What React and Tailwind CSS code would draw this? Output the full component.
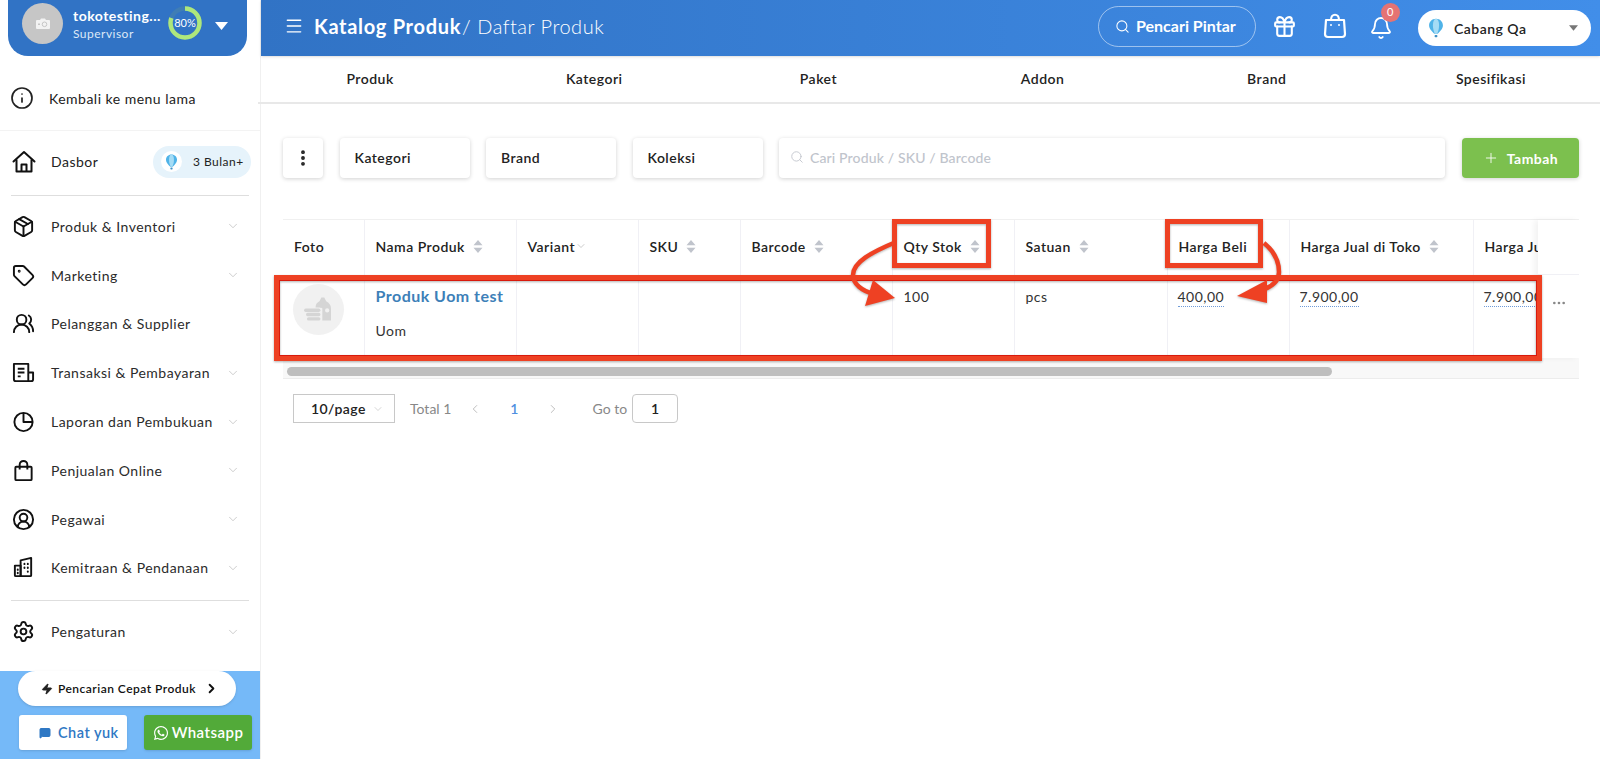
import React from 'react';
import {
  Info, Package, Tag, UsersRound, CircleUserRound, Settings, ChevronDown, ChevronLeft, ChevronRight,
  Search, Gift, Bell, Menu, Plus, Zap, MessageSquare, MoreVertical, MoreHorizontal,
} from 'lucide-react';
import { FaWhatsapp } from 'react-icons/fa';

function HomeIcon({ className }) {
  return (
    <svg viewBox="0 0 24 24" className={className} fill="none" stroke="currentColor" strokeWidth="2" strokeLinejoin="round">
      <path d="M1.500 11.500L12 2l10.500 9.500" strokeLinecap="round" />
      <path d="M4.500 9.500V21.500h15V9.500" />
      <path d="M9.500 21.500v-7h5v7" />
    </svg>
  );
}

function ReceiptIcon({ className }) {
  return (
    <svg viewBox="0 0 24 24" className={className} fill="none" stroke="currentColor" strokeWidth="2" strokeLinejoin="round">
      <path d="M2 3h15v18H4a2 2 0 0 1-2-2z" />
      <path d="M17 12h5v7a2 2 0 0 1-2 2h-3" />
      <path d="M6 8h7M6 12h7M6 16h3" />
    </svg>
  );
}

function PieIcon({ className }) {
  return (
    <svg viewBox="0 0 24 24" className={className} fill="none" stroke="currentColor" strokeWidth="2" strokeLinejoin="round">
      <circle cx="12" cy="12.500" r="9.500" />
      <path d="M12 3v9.500h9.500" />
    </svg>
  );
}

function BagIcon({ className }) {
  return (
    <svg viewBox="0 0 24 24" className={className} fill="none" stroke="currentColor" strokeWidth="2" strokeLinejoin="round">
      <rect x="3.500" y="8" width="17" height="14" rx="1" />
      <path d="M8 11V6a4 4 0 0 1 8 0v5" />
    </svg>
  );
}

function BuildingIcon({ className }) {
  return (
    <svg viewBox="0 0 24 24" className={className} fill="none" stroke="currentColor" strokeWidth="2" strokeLinejoin="round">
      <path d="M3 10h6V21H4a1 1 0 0 1-1-1z" />
      <path d="M9 21V4.500L20 2v18a1 1 0 0 1-1 1z" />
      <path d="M6 14v.500M6 17.500v.500M13 8v.500M16.500 8v.500M13 12v.500M16.500 12v.500M16.500 16v.500" strokeLinecap="round" />
    </svg>
  );
}

function CameraGlyph() {
  return (
    <svg viewBox="0 0 14 11" className="h-[11px] w-[14px]">
      <path d="M1 2h3l1-1.500h4L10 2h3a1 1 0 0 1 1 1v7a1 1 0 0 1-1 1H1a1 1 0 0 1-1-1V3a1 1 0 0 1 1-1z" fill="#f2f2f2" />
      <circle cx="8.500" cy="6.300" r="2.300" fill="none" stroke="#c6c6c6" strokeWidth="1" />
      <rect x="2" y="5.500" width="2" height="1.500" fill="#c6c6c6" />
    </svg>
  );
}

const menu = [
  { icon: Package, label: 'Produk & Inventori', more: true },
  { icon: Tag, label: 'Marketing', more: true },
  { icon: UsersRound, label: 'Pelanggan & Supplier' },
  { icon: ReceiptIcon, label: 'Transaksi & Pembayaran', more: true },
  { icon: PieIcon, label: 'Laporan dan Pembukuan', more: true },
  { icon: BagIcon, label: 'Penjualan Online', more: true },
  { icon: CircleUserRound, label: 'Pegawai', more: true },
  { icon: BuildingIcon, label: 'Kemitraan & Pendanaan', more: true },
];

const tabs = ['Produk', 'Kategori', 'Paket', 'Addon', 'Brand', 'Spesifikasi'];

const columns = [
  { label: 'Foto', width: 'w-[81px]' },
  { label: 'Nama Produk', width: 'w-[152px]', sort: true },
  { label: 'Variant', width: 'w-[122px]', caret: true },
  { label: 'SKU', width: 'w-[102px]', sort: true },
  { label: 'Barcode', width: 'w-[152px]', sort: true },
  { label: 'Qty Stok', width: 'w-[122px]', sort: true },
  { label: 'Satuan', width: 'w-[153px]', sort: true },
  { label: 'Harga Beli', width: 'w-[122px]' },
  { label: 'Harga Jual di Toko', width: 'w-[184px]', sort: true },
  { label: 'Harga Jual Online', width: 'w-[184px]', sort: true },
];

function Balloon({ className }) {
  return (
    <svg viewBox="0 0 20 26" className={className}>
      <path d="M10 1C4.800 1 1 4.800 1 9.600c0 4.600 4.600 8.400 7 11h4c2.400-2.600 7-6.400 7-11C19 4.800 15.200 1 10 1z" fill="#4fb3e8" />
      <path d="M10 1C7.500 1 6 5 6 9.600c0 4.200 1.400 8.200 2.500 11h3c1.100-2.800 2.500-6.800 2.500-11C14 5 12.500 1 10 1z" fill="#a5dcf5" />
      <rect x="8.200" y="22" width="3.600" height="3" rx="1" fill="#3d8fc4" />
    </svg>
  );
}

function SortIcon() {
  return (
    <svg viewBox="0 0 10 13" className="ml-2 h-[13px] w-[10px] shrink-0">
      <path d="M5 0l4.500 5.200h-9z M5 13L.5 7.800h9z" fill="#c0c4cc" />
    </svg>
  );
}

function Sidebar() {
  return (
    <aside className="flex h-full w-[261px] shrink-0 flex-col border-r border-[#f0f0f0] bg-white">
      <div className="mx-2 flex h-[56px] w-[239px] items-start rounded-b-[20px] bg-[#3173c5] pl-[14px] pt-[3px] text-white">
        <div className="flex h-[41px] w-[41px] items-center justify-center rounded-full bg-[#c6c6c6]">
          <CameraGlyph />
        </div>
        <div className="ml-[10px] w-[88px] whitespace-nowrap pt-[3px]">
          <div className="text-[14px] leading-[20px] font-bold">tokotesting...</div>
          <div className="text-[12px] leading-[16px] text-[#dce8f7]">Supervisor</div>
        </div>
        <div className="relative ml-[7px] mt-[3px] flex h-[34px] w-[34px] items-center justify-center">
          <svg viewBox="0 0 34 34" className="absolute inset-0 h-[34px] w-[34px]">
            <circle cx="17" cy="17" r="14.500" fill="none" stroke="#3f7db5" strokeWidth="4.500" />
            <circle cx="17" cy="17" r="14.500" fill="none" stroke="#aee77c" strokeWidth="4.500" strokeDasharray="72.900 91.100" transform="rotate(-90 17 17)" />
          </svg>
          <span className="relative text-[11px] tracking-normal text-white">80%</span>
        </div>
        <svg viewBox="0 0 13 8" className="ml-[13px] mt-[19px] h-[8px] w-[13px]"><path d="M0 0h13L6.500 8z" fill="#fff" /></svg>
      </div>

      <div className="mt-[10px] flex h-[65px] items-center border-b border-[#f3f3f3] pl-[10px] text-[14px] text-[#222]">
        <Info className="h-[24px] w-[24px]" strokeWidth={1.7} />
        <span className="ml-[15px]">Kembali ke menu lama</span>
      </div>
      <div className="flex h-[64px] items-center pb-[3px] pl-[12px] text-[14px] text-[#222]">
        <HomeIcon className="h-[24px] w-[24px] text-[#111]" />
        <span className="ml-[15px]">Dasbor</span>
        <div className="ml-auto mr-[9px] flex h-[32px] w-[98px] items-center rounded-full bg-[#e6f3fb] pl-[8px] text-[12px]">
          <div className="flex h-[21px] w-[21px] items-center justify-center rounded-full bg-white">
            <Balloon className="h-[16px] w-[13px]" />
          </div>
          <span className="ml-[11px]">3 Bulan+</span>
        </div>
      </div>
      <div className="mx-[11px] h-px bg-[#dedede]" />

      <nav className="mt-[6px]">
        {menu.map((item) => (
          <MenuRow key={item.label} {...item} />
        ))}
      </nav>
      <div className="mx-[11px] mt-[8px] h-px bg-[#dedede]" />
      <div className="mt-[6px]">
        <MenuRow icon={Settings} label="Pengaturan" more />
      </div>

      <div className="mt-auto h-[88px] bg-[#75b9f8] pl-[18px]">
        <div className="flex h-[35px] w-[218px] items-center rounded-full bg-white pl-[23px] text-[12px] font-semibold text-[#111] shadow-sm">
          <Zap className="h-[12px] w-[12px] fill-[#222] text-[#222]" />
          <span className="ml-[5px]">Pencarian Cepat Produk</span>
          <ChevronRight className="ml-auto mr-[17px] h-[15px] w-[15px]" strokeWidth={3} />
        </div>
        <div className="mt-[9px] flex gap-[17px] pl-px">
          <div className="flex h-[35px] w-[108px] shrink-0 items-center rounded-[3px] bg-white pl-[20px] text-[14.5px] font-semibold text-[#2f78c4] shadow-sm">
            <MessageSquare className="mr-[7px] h-[12px] w-[12px] fill-[#2f78c4]" />
            Chat yuk
          </div>
          <div className="flex h-[35px] w-[108px] shrink-0 items-center justify-center rounded-[3px] bg-[#52aa39] text-[15px] font-semibold text-white shadow-sm">
            <FaWhatsapp className="mr-[3px] h-[16px] w-[16px]" />
            Whatsapp
          </div>
        </div>
      </div>
    </aside>
  );
}

function MenuRow({ icon: Icon, label, more }) {
  return (
    <div className="flex h-[48.8px] items-center pl-[12px] pr-[20px] text-[14px] text-[#2b2b2b]">
      <Icon className="h-[23px] w-[23px] text-[#111]" strokeWidth={2} />
      <span className="ml-[16px]">{label}</span>
      {more && <ChevronDown className="ml-auto h-[14px] w-[14px] text-[#b9b9b9]" strokeWidth={1.2} />}
    </div>
  );
}

function Header() {
  return (
    <header className="flex h-[56px] shrink-0 items-center bg-gradient-to-r from-[#3173c5] to-[#418ee9] pb-[4px] pl-[23px] text-white shadow-sm">
      <Menu className="h-[20px] w-[20px]" strokeWidth={1.7} />
      <div className="ml-[10px] text-[20px]">
        <span className="font-bold tracking-[0.035em]">Katalog Produk</span>
        <span className="ml-[1px] font-light tracking-[0.025em]">/ Daftar Produk</span>
      </div>
      <div className="ml-auto flex h-[41px] w-[158px] items-center rounded-full border border-white/50 pl-[16px] text-[16px] font-bold tracking-normal">
        <Search className="h-[15px] w-[15px]" strokeWidth={1.7} />
        <span className="ml-[6px]">Pencari Pintar</span>
      </div>
      <Gift className="ml-[16px] h-[25px] w-[25px]" strokeWidth={2} />
      <svg viewBox="0 0 24 26" className="ml-[26px] h-[26px] w-[24px]" fill="none" stroke="#fff" strokeWidth="2.200">
        <path d="M3 7h18l1 14a3 3 0 0 1-3 3H5a3 3 0 0 1-3-3z" strokeLinejoin="round" />
        <path d="M8 7c0-7 8-7 8 0" />
        <circle cx="8" cy="12" r="1" fill="#fff" stroke="none" />
        <circle cx="16" cy="12" r="1" fill="#fff" stroke="none" />
      </svg>
      <div className="relative ml-[22px] mt-[3px]">
        <Bell className="h-[24px] w-[24px]" strokeWidth={1.8} />
        <span className="absolute -right-[7px] -top-[13px] flex h-[19px] w-[19px] items-center justify-center rounded-full bg-[#e57373] text-[11px]">0</span>
      </div>
      <div className="ml-[25px] mr-[9px] mt-[4px] flex h-[36px] w-[173px] items-center rounded-full bg-white pl-[10px] text-[14px] font-semibold text-[#222]">
        <Balloon className="h-[20px] w-[16px]" />
        <span className="ml-[10px]">Cabang Qa</span>
        <svg viewBox="0 0 10 6" className="ml-auto mr-[13px] h-[6px] w-[9px]"><path d="M0 0h10L5 6z" fill="#777" /></svg>
      </div>
    </header>
  );
}

function Toolbar() {
  return (
    <div className="flex h-[40px] pl-[22px] pr-[21px] text-[14px] font-semibold text-[#222]">
      <div className="flex w-[40px] items-center justify-center rounded-[4px] bg-white shadow-[0_1px_4px_rgba(0,0,0,0.18)]">
        <MoreVertical className="h-[20px] w-[20px]" strokeWidth={2.6} />
      </div>
      {['Kategori', 'Brand', 'Koleksi'].map((f) => (
        <div key={f} className="ml-[16.5px] flex w-[130px] items-center rounded-[4px] bg-white pb-[2px] pl-[15px] shadow-[0_1px_4px_rgba(0,0,0,0.18)]">
          {f}
        </div>
      ))}
      <div className="ml-[16.5px] flex flex-1 items-center rounded-[4px] bg-white pb-[2px] pl-[11px] text-[14px] font-medium tracking-[0.01em] text-[#c0c4cc] shadow-[0_1px_4px_rgba(0,0,0,0.18)]">
        <Search className="h-[14px] w-[14px]" strokeWidth={1.5} />
        <span className="ml-[6px]">Cari Produk / SKU / Barcode</span>
      </div>
      <div className="ml-[17px] flex w-[117px] items-center justify-center rounded-[4px] bg-[#7cc04e] font-bold text-white shadow-[0_1px_4px_rgba(0,0,0,0.18)]">
        <Plus className="h-[16px] w-[16px]" strokeWidth={1.3} />
        <span className="ml-[8px]">Tambah</span>
      </div>
    </div>
  );
}

function Price({ children }) {
  return <span className="border-b border-dotted border-[#6f9bd8] pb-px">{children}</span>;
}

function ProductTable() {
  return (
    <div className="relative ml-[22px] mt-[41px] w-[1296px] border-t border-[#f0f0f0]">
      <div className="overflow-hidden">
        <table className="w-[1374px] table-fixed border-collapse text-[14px]">
          <colgroup>
            {columns.map((c) => <col key={c.label} className={c.width} />)}
          </colgroup>
          <thead>
            <tr className="h-[55px] border-b border-[#f0f0f5] text-left text-[#222]">
              {columns.map((c) => (
                <th key={c.label} className="border-r border-[#f0f0f5] pb-[2px] pl-[11px] font-semibold">
                  <div className="flex items-center whitespace-nowrap">
                    {c.label}
                    {c.sort && <SortIcon />}
                    {c.caret && <ChevronDown className="h-[12px] w-[12px] text-[#aaa]" strokeWidth={1.2} />}
                  </div>
                </th>
              ))}
            </tr>
          </thead>
          <tbody>
            <tr className="h-[82px] align-top text-[#333]">
              <td className="border-r border-[#f0f0f5] pl-[10px] pt-[8px]">
                <div className="flex h-[51px] w-[51px] items-center justify-center rounded-full bg-[#f1f1f1]">
                  <svg viewBox="0 0 30 26" className="h-[25px] w-[29px]">
                    <rect x="0" y="12" width="17" height="3.500" rx="1.700" fill="#d5d5d5" />
                    <rect x="2" y="16.500" width="15" height="3.500" rx="1.700" fill="#d5d5d5" />
                    <rect x="3" y="21" width="14" height="3.500" rx="1.700" fill="#d5d5d5" />
                    <path d="M12 11c0-3 1-5 4-6.500L18 .5h3l2 4c3 1.500 5 4 5 7.500v12.500H19V12c0-.5-3-1-7-1z" fill="#d5d5d5" />
                    <circle cx="24" cy="14" r="2.200" fill="#f1f1f1" />
                  </svg>
                </div>
              </td>
              <td className="border-r border-[#f0f0f5] pl-[11px] pt-[9px]">
                <div className="text-[16px] leading-[22px] font-bold text-[#3d80b8]">Produk Uom test</div>
                <div className="mt-[14px] leading-[20px]">Uom</div>
              </td>
              <td className="border-r border-[#f0f0f5]" />
              <td className="border-r border-[#f0f0f5]" />
              <td className="border-r border-[#f0f0f5]" />
              <td className="border-r border-[#f0f0f5] pl-[11px] pt-[11px] leading-[20px]">100</td>
              <td className="border-r border-[#f0f0f5] pl-[11px] pt-[11px] leading-[20px]">pcs</td>
              <td className="border-r border-[#f0f0f5] pl-[10px] pt-[11px] leading-[20px]"><Price>400,00</Price></td>
              <td className="border-r border-[#f0f0f5] pl-[10px] pt-[11px] leading-[20px]"><Price>7.900,00</Price></td>
              <td className="border-r border-[#f0f0f5] pl-[10px] pt-[11px] leading-[20px]"><Price>7.900,00</Price></td>
            </tr>
          </tbody>
        </table>
      </div>

      {/* kolom aksi yang menempel di kanan */}
      <div className="absolute right-0 top-0 flex h-[138px] w-[41px] flex-col bg-white shadow-[-4px_0_6px_rgba(0,0,0,0.05)]">
        <div className="h-[55px] border-b border-[#f0f0f5]" />
        <div className="flex flex-1 items-start justify-center pt-[20px]">
          <MoreHorizontal className="h-[16px] w-[16px] text-[#888]" />
        </div>
      </div>

      <div className="flex h-[22px] items-end border-y border-[#ececec] bg-[#f8f8f8] pb-[2px] pl-[4px]">
        <div className="h-[9px] w-[1045px] rounded-full bg-[#bebebe]" />
      </div>
    </div>
  );
}

function Pagination() {
  return (
    <div className="ml-[32px] mt-[15px] flex h-[29px] items-center text-[14px] tracking-normal text-[#888]">
      <div className="flex h-[29px] w-[102px] items-center border border-[#c8c8c8] pl-[17px] font-semibold tracking-[0.03em] text-[#222]">
        10/page
        <ChevronDown className="ml-auto mr-[10px] h-[12px] w-[12px] text-[#bbb]" strokeWidth={1.2} />
      </div>
      <span className="ml-[15px]">Total 1</span>
      <ChevronLeft className="ml-[17px] h-[14px] w-[14px] text-[#aaa]" strokeWidth={1.3} />
      <span className="ml-[28px] font-semibold text-[#4f8fe0]">1</span>
      <ChevronRight className="ml-[28px] h-[14px] w-[14px] text-[#aaa]" strokeWidth={1.3} />
      <span className="ml-[32px]">Go to</span>
      <div className="ml-[5px] flex h-[29px] w-[46px] items-center justify-center rounded-[4px] border border-[#c8c8c8] font-semibold text-[#222]">1</div>
    </div>
  );
}

// anotasi merah di atas screenshot
function Annotations() {
  const red = '#ee4123';
  return (
    <svg viewBox="0 0 1600 759" className="pointer-events-none absolute inset-0 h-[759px] w-[1600px]" fill="none">
      <g style={{ filter: 'drop-shadow(0 1px 1px rgba(0,0,0,0.3))' }}>
        <rect x="276.500" y="277.500" width="1263" height="81" stroke={red} strokeWidth="5" />
        <rect x="279.500" y="280.500" width="1257" height="75" stroke="#d81a0c" strokeWidth="1" />
        <rect x="894.500" y="221.500" width="94" height="44" stroke={red} strokeWidth="5" />
        <rect x="1167.500" y="221.500" width="93" height="44" stroke={red} strokeWidth="5" />
        <path d="M896 242C872 252 853 262 853 275C853 284 862 291 874 294" stroke={red} strokeWidth="4.500" />
        <path d="M895 298L873 280L865 306Z" fill={red} />
        <path d="M1264 243C1275 252 1279 262 1279 272C1279 282 1270 288 1258 291" stroke={red} strokeWidth="4.500" />
        <path d="M1237 296L1267 280L1267 303Z" fill={red} />
      </g>
    </svg>
  );
}

export default function App() {
  return (
    <div className="relative flex h-[759px] w-[1600px] overflow-hidden bg-white font-['Lato',sans-serif] tracking-[0.03em]">
      <Sidebar />
      <main className="flex min-w-0 flex-1 flex-col">
        <Header />
        <div className="-ml-[3px] grid h-[48px] w-[1345px] shrink-0 grid-cols-6 border-b-2 border-[#e8e8e8] pb-[2px] text-[14px] font-semibold text-[#222]">
          {tabs.map((t) => (
            <div key={t} className="flex items-center justify-center">{t}</div>
          ))}
        </div>
        <div className="mt-[34px]">
          <Toolbar />
          <ProductTable />
          <Pagination />
        </div>
      </main>
      <Annotations />
    </div>
  );
}
